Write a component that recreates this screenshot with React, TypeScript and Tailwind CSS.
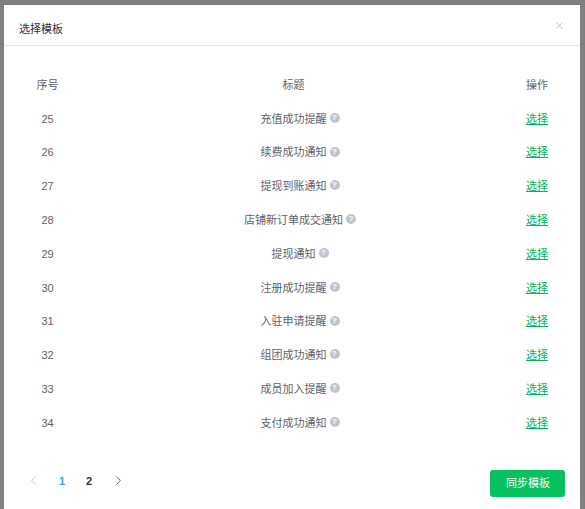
import { ChevronLeft, ChevronRight, X } from "lucide-react";

const rows = [
  { id: 25, title: "充值成功提醒" },
  { id: 26, title: "续费成功通知" },
  { id: 27, title: "提现到账通知" },
  { id: 28, title: "店铺新订单成交通知" },
  { id: 29, title: "提现通知" },
  { id: 30, title: "注册成功提醒" },
  { id: 31, title: "入驻申请提醒" },
  { id: 32, title: "组团成功通知" },
  { id: 33, title: "成员加入提醒" },
  { id: 34, title: "支付成功通知" },
];

export default function App() {
  return (
    <div
      className="h-[509px] overflow-hidden bg-[#7f7f7f] pl-[4px] pt-[5px] text-[11px] text-[#606266]"
      style={{ fontFamily: '"Liberation Sans", "Noto Sans CJK SC", sans-serif' }}
    >
      <div className="flex h-[504px] w-[576px] flex-col bg-white">
        <div className="flex h-[41px] items-center justify-between border-b border-[#e4e4e4] pl-[15px] pr-[15px]">
          <span className="mt-[8px] text-[11px] text-[#303133]">选择模板</span>
          <X size={11} strokeWidth={1.25} className="text-[#8f939a]" />
        </div>

        <div className="mt-[22px] pl-[16px] pr-[18px]">
          <div className="grid h-[34px] grid-cols-[55px_1fr_50px] items-center text-center">
            <span>序号</span>
            <span>标题</span>
            <span>操作</span>
          </div>
          {rows.map((r) => (
            <div
              key={r.id}
              className="grid h-[33.8px] grid-cols-[55px_1fr_50px] items-center text-center"
            >
              <span>{r.id}</span>
              <span>
                <span className="relative inline-block">
                  {r.title}
                  <span className="absolute left-full top-1/2 ml-[3px] flex h-[10px] w-[10px] -translate-y-[6px] items-center justify-center rounded-full bg-[#c0c4cc] text-[8px] font-bold leading-none text-white">
                    ?
                  </span>
                </span>
              </span>
              <span className="text-[#07b356] underline">选择</span>
            </div>
          ))}
        </div>

        <div className="mt-[30px] flex items-center justify-between pl-[22px] pr-[15px]">
          <div className="mb-[5px] flex items-center text-[11px] font-bold">
            <ChevronLeft size={15} strokeWidth={1.5} className="text-[#c0c4cc]" />
            <span className="ml-[15px] w-[12px] text-center text-[#409eff]">1</span>
            <span className="ml-[15px] w-[12px] text-center text-[#303133]">2</span>
            <ChevronRight size={15} strokeWidth={1.5} className="ml-[16px] text-[#606266]" />
          </div>
          <button
            type="button"
            className="h-[27px] w-[75px] rounded-[3px] bg-[#07c160] pl-[1px] text-[11px] text-white"
          >
            同步模板
          </button>
        </div>
      </div>
    </div>
  );
}
